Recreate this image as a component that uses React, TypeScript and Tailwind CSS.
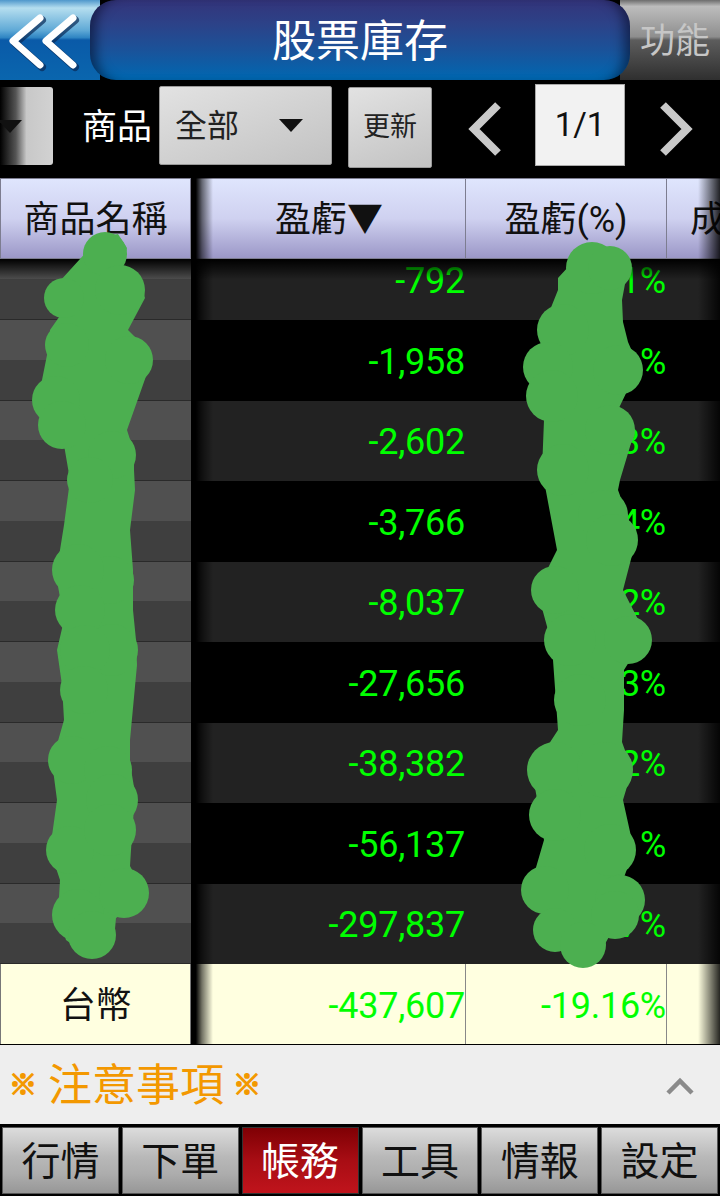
import React from 'react';

const ROWS = [
  { pl: '-792', pct: '1%' },
  { pl: '-1,958', pct: '%' },
  { pl: '-2,602', pct: '3%' },
  { pl: '-3,766', pct: '4%' },
  { pl: '-8,037', pct: '2%' },
  { pl: '-27,656', pct: '3%' },
  { pl: '-38,382', pct: '2%' },
  { pl: '-56,137', pct: '%' },
  { pl: '-297,837', pct: '7%' },
];

const TABS = ['行情', '下單', '帳務', '工具', '情報', '設定'];

// marker outline, then blobs as [cx, cy, r] for its rounded bumps
const LEFT_SCRIBBLE =
  '100,237 118,234 127,248 122,268 140,280 145,298 128,330 148,350 150,365 127,430 134,452 134,470 135,490 130,530 133,570 133,610 136,640 137,665 130,740 130,763 135,793 131,850 130,866 140,885 136,905 116,918 114,940 100,950 80,950 66,940 58,915 60,880 50,850 57,800 52,762 64,720 62,685 57,650 64,620 56,575 64,525 70,480 64,445 46,438 38,400 49,345 50,330 64,310 50,302 50,292';
const RIGHT_SCRIBBLE =
  '590,248 620,252 628,268 622,300 623,322 628,342 638,365 630,385 618,410 629,422 632,440 620,480 618,490 626,512 636,540 623,590 646,635 624,670 624,710 622,742 632,770 623,800 634,850 623,880 638,900 634,925 610,935 596,960 575,962 565,948 542,946 538,930 552,900 530,888 544,840 532,770 558,730 553,660 548,630 537,590 557,550 542,470 544,420 530,395 539,360 542,330 558,290 558,278 580,254';
const LEFT_BLOBS = [
  [105, 254, 22], [64, 298, 20], [120, 290, 25], [129, 360, 24], [67, 345, 22], [56, 400, 24],
  [62, 425, 24], [112, 455, 24], [90, 480, 23], [110, 580, 24], [78, 570, 26], [80, 610, 25],
  [112, 650, 26], [85, 650, 25], [84, 690, 24], [72, 760, 24], [108, 770, 24], [112, 800, 26],
  [70, 850, 24], [110, 830, 26], [124, 893, 25], [78, 915, 26], [92, 935, 24],
];
const RIGHT_BLOBS = [
  [592, 268, 26], [610, 268, 22], [563, 330, 26], [548, 367, 25], [552, 396, 26], [618, 370, 25],
  [610, 430, 25], [563, 470, 26], [603, 515, 25], [612, 540, 26], [555, 590, 24], [628, 640, 24],
  [570, 640, 26], [580, 700, 26], [555, 770, 28], [605, 770, 28], [555, 815, 26], [610, 850, 26],
  [545, 890, 24], [620, 900, 25], [555, 930, 22], [615, 915, 24], [583, 945, 23],
];

function Chevrons() {
  return (
    <svg width="90" height="80" viewBox="0 0 90 80" className="block">
      <g fill="none" strokeLinecap="round" strokeLinejoin="round">
        <path d="M42 20 15 43 42 67M75 20 48 43 75 67" stroke="#0a2a55" strokeOpacity="0.7" strokeWidth="8" />
        <path d="M40 18 13 41 40 65M73 18 46 41 73 65" stroke="#ffffff" strokeWidth="7" />
      </g>
    </svg>
  );
}

function Header() {
  return (
    <div className="flex h-20 shrink-0">
      <div className="h-full w-[100px] -mr-[10px] shrink-0 bg-[linear-gradient(180deg,#4f97cb_0%,#b5deef_10%,#5fa9d6_38%,#2f85c3_47%,#0a5aa8_50%,#0a66ae_100%)]">
        <Chevrons />
      </div>
      <div className="relative z-10 flex h-full flex-1 items-center justify-center rounded-[26px] bg-[linear-gradient(180deg,#33347a_0%,#2c4288_30%,#1c5198_60%,#0068b2_100%)] pt-[3px] shadow-[inset_14px_0_12px_-8px_rgba(0,0,20,0.5),inset_-14px_0_12px_-8px_rgba(0,0,20,0.5)] text-[44px] leading-none text-white">
        股票庫存
      </div>
      <div className="flex h-full w-[100px] -ml-[10px] shrink-0 items-center justify-end pr-[10px] pt-[3px] text-[35px] leading-none text-[#c6c6c6] bg-[linear-gradient(180deg,#6d6d6d_0%,#bdbdbd_8%,#8e8e8e_46%,#5d5d5d_50%,#2f2f2f_100%)]">
        功能
      </div>
    </div>
  );
}

function Caret() {
  return <span className="block h-0 w-0 border-x-[12px] border-t-[13px] border-x-transparent border-t-[#111]" />;
}

function Toolbar() {
  return (
    <div className="flex h-[98px] shrink-0 items-center bg-black">
      <div className="flex h-[78px] w-[53px] shrink-0 -mt-[6px] items-center rounded-r-[3px] bg-[linear-gradient(90deg,#000_0%,#555_30%,#c8c8c8_50%,#d2d2d2_100%)]">
        <span className="block h-0 w-0 -ml-[2px] border-x-[12px] border-t-[13px] border-x-transparent border-t-[#111]" />
      </div>
      <span className="ml-[29px] w-[77px] shrink-0 text-[35px] leading-none text-white -mt-[4px]">商品</span>
      <div className="flex h-[79px] w-[173px] shrink-0 -mt-[7px] items-center rounded-[2px] pl-[15px] pr-[28px] justify-between border border-[#999] bg-[linear-gradient(160deg,#e2e2e2_0%,#c2c2c2_100%)] text-[32px] leading-none text-[#222]">
        <span>全部</span>
        <Caret />
      </div>
      <div className="ml-[16px] flex h-[81px] w-[84px] shrink-0 -mt-[4px] items-center justify-center rounded-[2px] border border-[#999] bg-[linear-gradient(160deg,#e2e2e2_0%,#c2c2c2_100%)] text-[27px] leading-none text-[#222]">
        更新
      </div>
      <svg width="36" height="56" viewBox="0 0 36 56" className="ml-[36px] shrink-0">
        <path d="M30 4 6 28 30 52" fill="none" stroke="#c9c9c9" strokeWidth="8" />
      </svg>
      <div className="ml-[31px] flex h-[82px] w-[90px] shrink-0 -mt-[9px] items-center justify-center border border-[#aaa] bg-[#f2f2f2] text-[33px] leading-none text-[#111]">
        1/1
      </div>
      <svg width="36" height="56" viewBox="0 0 36 56" className="ml-[32px] shrink-0">
        <path d="M6 4 30 28 6 52" fill="none" stroke="#c9c9c9" strokeWidth="8" />
      </svg>
    </div>
  );
}

function HeaderRow() {
  const cell =
    'flex h-full items-center justify-center border-y border-[#7d7d90] bg-[linear-gradient(180deg,#dfe5fd_0%,#cfd1f0_50%,#9b97c7_100%)] pt-[3px] text-[36px] leading-none whitespace-nowrap text-[#111]';
  return (
    <div className="flex h-[81px] shrink-0 bg-black">
      <div className={`${cell} w-[191px] shrink-0 border-x`}>商品名稱</div>
      <div className="relative flex h-full flex-1 overflow-hidden">
        <div className={`${cell} w-[275px] shrink-0 border-r pl-[2px]`}>盈虧▼</div>
        <div className={`${cell} w-[201px] shrink-0 border-r`}>盈虧(%)</div>
        <div className={`${cell} flex-1 justify-start! pl-[23px]`}>成</div>
        <EdgeShade />
      </div>
    </div>
  );
}

function EdgeShade() {
  return (
    <>
      <div className="pointer-events-none absolute inset-y-0 left-0 w-[22px] bg-[linear-gradient(90deg,#000_0%,#000_22%,rgba(0,0,0,0.55)_50%,rgba(0,0,0,0)_100%)]" />
      <div className="pointer-events-none absolute inset-y-0 right-0 w-[22px] bg-[linear-gradient(90deg,rgba(0,0,0,0)_0%,rgba(0,0,0,0.85)_100%)]" />
    </>
  );
}

function Body() {
  return (
    <div className="relative flex h-[705px] shrink-0 overflow-hidden bg-black">
      <div className="w-[191px] shrink-0">
        <div className="-mt-[19.5px]">
          {ROWS.map((r) => (
            <div key={r.pl} className="flex h-[80.5px] flex-col border-b border-[#2a2a2a]">
              <div className="flex-1 bg-[#505050]" />
              <div className="flex-1 bg-[#3f3f3f]" />
            </div>
          ))}
        </div>
      </div>
      <div className="relative flex-1 overflow-hidden">
        <div className="-mt-[19.5px]">
          {ROWS.map((r, i) => (
            <div
              key={r.pl}
              className={`flex h-[80.5px] items-center pt-[3px] text-[36px] leading-none tracking-[-0.25px] text-[#00ff00] ${i % 2 === 0 ? 'bg-[#222222]' : 'bg-black'}`}
            >
              <span className="w-[274px] shrink-0 text-right">{r.pl}</span>
              <span className="w-[201px] shrink-0 text-right">{r.pct}</span>
            </div>
          ))}
        </div>
        <EdgeShade />
      </div>
      <div className="pointer-events-none absolute inset-x-0 top-0 h-[21px] bg-[linear-gradient(180deg,#000_0%,rgba(0,0,0,0)_100%)]" />
    </div>
  );
}

function TotalRow() {
  return (
    <div className="flex h-[81px] shrink-0 border-b border-black bg-black text-[36px] leading-none tracking-[-0.25px]">
      <div className="flex w-[191px] shrink-0 items-center justify-center border-x border-[#777] bg-[#ffffe0] pt-[3px] text-[#111]">
        台幣
      </div>
      <div className="relative flex flex-1 overflow-hidden bg-[#ffffe0] text-[#00ff00]">
        <div className="flex w-[275px] shrink-0 items-center justify-end border-r border-[#888] pt-[3px]">-437,607</div>
        <div className="flex w-[201px] shrink-0 items-center justify-end border-r border-[#888] pt-[3px]">-19.16%</div>
        <EdgeShade />
      </div>
    </div>
  );
}

function Notice() {
  return (
    <div className="flex h-[79px] shrink-0 items-center justify-between bg-[#eeeeee] pr-[26px] pt-[3px]">
      <div className="flex items-center text-[44px] leading-none text-[#f39800]">
        <span className="w-[46px] text-center text-[28px] font-bold [-webkit-text-stroke:1.5px_#f39800]">※</span>
        <span className="ml-[2px]">注意事項</span>
        <span className="w-[46px] text-center text-[28px] font-bold [-webkit-text-stroke:1.5px_#f39800]">※</span>
      </div>
      <svg width="28" height="18" viewBox="0 0 28 18">
        <path d="M2 16 14 4 26 16" fill="none" stroke="#8a8a8a" strokeWidth="4.5" />
      </svg>
    </div>
  );
}

function TabBar() {
  return (
    <div className="grid h-[72px] shrink-0 grid-cols-6 gap-[3px] bg-black px-[2px] pt-[3px] pb-[2px]">
      {TABS.map((t) => (
        <div
          key={t}
          className={
            t === '帳務'
              ? 'flex items-center justify-center border border-[#333] pt-[3px] text-[39px] leading-none text-white bg-[linear-gradient(180deg,#7f0004_0%,#a80d14_50%,#c0141c_100%)]'
              : 'flex items-center justify-center border border-[#555] pt-[3px] text-[39px] leading-none text-[#111] bg-[linear-gradient(180deg,#dcdcdc_0%,#b8b8b8_45%,#adadad_70%,#979797_100%)]'
          }
        >
          {t}
        </div>
      ))}
    </div>
  );
}

export default function App() {
  return (
    <div className="relative flex h-[1196px] w-[720px] flex-col overflow-hidden bg-black font-['Roboto','Noto_Sans_CJK_TC',sans-serif]">
      <Header />
      <Toolbar />
      <HeaderRow />
      <Body />
      <TotalRow />
      <Notice />
      <TabBar />
      {/* green marker scrawled over the private columns */}
      <svg width="720" height="1196" viewBox="0 0 720 1196" className="pointer-events-none absolute left-0 top-0">
        <g fill="#4caf50">
          <polygon points={LEFT_SCRIBBLE} />
          <polygon points={RIGHT_SCRIBBLE} />
          {[...LEFT_BLOBS, ...RIGHT_BLOBS].map(([cx, cy, r]) => (
            <circle key={`${cx}-${cy}`} cx={cx} cy={cy} r={r} />
          ))}
        </g>
      </svg>
    </div>
  );
}
